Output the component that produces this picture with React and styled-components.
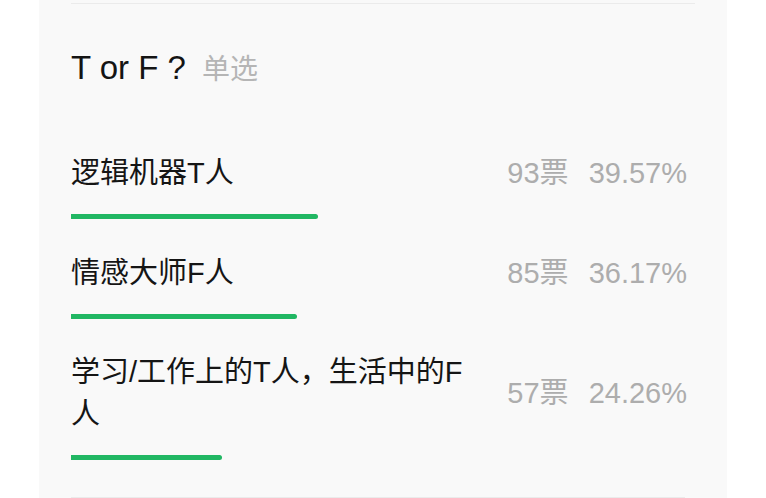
import React from "react";
import styled, { createGlobalStyle } from "styled-components";

const GlobalStyle = createGlobalStyle`
  html, body {
    margin: 0;
    padding: 0;
    background: #ffffff;
  }
  body {
    font-family: "Liberation Sans", "Noto Sans CJK SC", sans-serif;
  }
`;

const Page = styled.div`
  width: 766px;
  height: 498px;
  overflow: hidden;
  background: #ffffff;
`;

const Card = styled.section`
  margin-left: 39px;
  width: 688px;
  height: 498px;
  box-sizing: border-box;
  background: #f9f9f9;
  padding: 0 32px;
  display: flex;
  flex-direction: column;
`;

const Divider = styled.div`
  flex: none;
  height: 1px;
  background: #ebebeb;
  margin-top: ${(p) => p.$top || 0}px;
  margin-right: ${(p) => p.$right || 0}px;
`;

const Title = styled.h2`
  margin: 44px 0 0;
  font-weight: 400;
  font-size: 33px;
  line-height: 40px;
  color: #141414;
  display: flex;
  align-items: baseline;
  gap: 16px;
`;

const Tag = styled.span`
  font-size: 28px;
  color: #b5b5b5;
`;

const Options = styled.div`
  margin-top: 62px;
  display: flex;
  flex-direction: column;
  gap: 32.5px;
`;

const Option = styled.div`
  display: flex;
  flex-direction: column;
  gap: 20px;
`;

const Head = styled.div`
  display: flex;
  align-items: center;
  justify-content: space-between;
`;

const Label = styled.div`
  max-width: 400px;
  font-size: 29px;
  line-height: 42px;
  color: #151515;
`;

const Stats = styled.div`
  display: flex;
  gap: 20px;
  margin-right: 8px;
  font-size: 29px;
  line-height: 42px;
  color: #adadad;
  white-space: nowrap;
`;

const Track = styled.div`
  height: 5px;
  width: 100%;
`;

const Bar = styled.div`
  height: 5px;
  background: #21b763;
  border-radius: 0 3px 3px 0;
`;

const data = [
  { label: "逻辑机器T人", votes: 93, pct: 39.57 },
  { label: "情感大师F人", votes: 85, pct: 36.17 },
  { label: "学习/工作上的T人，生活中的F人", votes: 57, pct: 24.26 },
];

export default function App() {
  return (
    <Page>
      <GlobalStyle />
      <Card>
        <Divider $top={3} />
        <Title>
          T or F ?<Tag>单选</Tag>
        </Title>
        <Options>
          {data.map((o) => (
            <Option key={o.label}>
              <Head>
                <Label>{o.label}</Label>
                <Stats>
                  <span>{o.votes}票</span>
                  <span>{o.pct.toFixed(2)}%</span>
                </Stats>
              </Head>
              <Track>
                <Bar style={{ width: `${o.pct}%` }} />
              </Track>
            </Option>
          ))}
        </Options>
        <Divider $top={37} $right={10} />
      </Card>
    </Page>
  );
}
